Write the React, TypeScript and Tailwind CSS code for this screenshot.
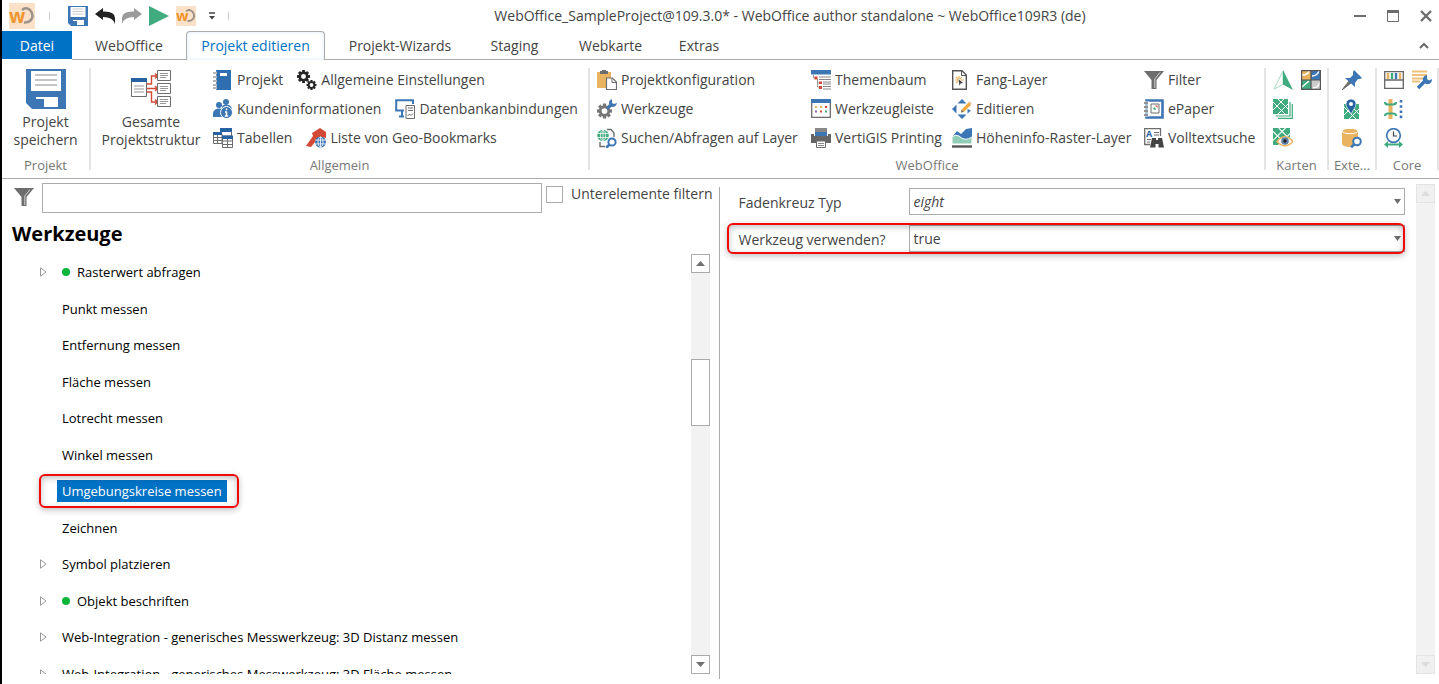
import type { ReactNode } from 'react';

const BLUE = '#3c76b5';
const GREEN = '#3fab7e';
const GREY = '#6d6d6d';
const SAND = '#e9b35f';
const RED = '#d24a35';

function Svg({ children, size = 'h-5 w-5', box = '0 0 20 20' }: { children: ReactNode; size?: string; box?: string }) {
  return (
    <svg className={`${size} shrink-0`} viewBox={box} fill="none" aria-hidden="true">
      {children}
    </svg>
  );
}

function Gear({ x, y, r, color }: { x: number; y: number; r: number; color: string }) {
  return (
    <g transform={`translate(${x} ${y})`} fill={color}>
      {[0, 45, 90, 135].map((a) => (
        <rect key={a} x={-r * 0.22} y={-r} width={r * 0.44} height={r * 2} transform={`rotate(${a})`} />
      ))}
      <circle r={r * 0.76} />
      <circle r={r * 0.38} fill="#fff" />
    </g>
  );
}

function Globe({ x, y, r, color }: { x: number; y: number; r: number; color: string }) {
  return (
    <g transform={`translate(${x} ${y})`}>
      <circle r={r} fill={color} />
      <g stroke="#fff" strokeWidth="0.8">
        <ellipse rx={r * 0.45} ry={r * 0.85} />
        <path d={`M0 ${-r}V${r}M${-r} ${-r * 0.35}H${r}M${-r} ${r * 0.35}H${r}`} />
      </g>
    </g>
  );
}

function Lens({ x, y, r }: { x: number; y: number; r: number }) {
  return (
    <g stroke={BLUE} strokeWidth="2">
      <path d={`M${x - r * 0.7} ${y + r * 0.7}l-3.2 3.2`} strokeWidth="2.6" />
      <circle cx={x} cy={y} r={r} fill="#fff" />
    </g>
  );
}

function MapTile({ x = 0, y = 0, s = 15 }: { x?: number; y?: number; s?: number }) {
  return (
    <g transform={`translate(${x} ${y}) scale(${s / 15})`}>
      <path d="M0 0H15V15H0Z" fill={GREEN} />
      <path d="M0 3L12 15M5 0L15 10M0 11L11 0M5 15L15 5" stroke="#fff" strokeWidth="1" />
    </g>
  );
}

const icons = {
  save: (
    <>
      <path d="M0 0H20V20H3L0 17Z" fill={BLUE} />
      <path d="M2.500 1H17.500V11H2.500ZM5 14H16V19H5Z" fill="#fff" />
      <path d="M4.500 3H15.500M4.500 5.500H15.500M4.500 8H15.500" stroke="#c4c4c4" strokeWidth="0.9" />
      <path d="M5 15H9V19H5Z" fill={BLUE} />
    </>
  ),
  notebook: (
    <>
      <path d="M3 0H18V20H3Z" fill="#2f6fb0" />
      <path d="M7 3H14V6H7Z" fill="#fff" />
      <path d="M0 3H4M0 7H4M0 11H4M0 15H4M0 18H4" stroke="#fff" strokeWidth="2.400" />
      <path d="M0 3H4M0 7H4M0 11H4M0 15H4M0 18H4" stroke={GREY} strokeWidth="1.200" />
    </>
  ),
  gears: (
    <>
      <Gear x={6.5} y={6.500} r={6.500} color="#262626" />
      <Gear x={14.500} y={15} r={5} color="#262626" />
    </>
  ),
  people: (
    <>
      <g fill={BLUE}>
        <circle cx="13" cy="3" r="3" />
        <circle cx="6" cy="6" r="3" />
        <path d="M9 8Q9 6 11 6H16Q19 7 19 12H9Z" />
        <path d="M0 18V14Q1 9.500 6 9.500Q11 9.500 11 14V18Z" />
      </g>
      <circle cx="13.500" cy="13.500" r="6" fill={BLUE} stroke="#fff" />
      <path d="M13.500 9.500V11.300M13.500 12.500V17.500M12 13H14M11.800 17H15.200" stroke="#fff" strokeWidth="1.500" />
    </>
  ),
  dbLink: (
    <>
      <path d="M9 11.500H1.200V1.200H18V5" stroke={BLUE} strokeWidth="2" />
      <path d="M4 17.500H9M7 12V17" stroke={BLUE} strokeWidth="2" />
      <path d="M11 6.500H19.500V19.500H11Z" fill="#fff" stroke={GREY} />
      <path d="M13 9H18M13 11.500H18M12.500 17L14.500 15L16 16.500L18 14.500" stroke={GREY} />
    </>
  ),
  tables: (
    <>
      <path d="M7.500 1.500H18.500V8H7.500Z" fill="#fff" stroke={GREY} />
      <path d="M7 0H19V4H7Z" fill="#2762a3" />
      <path d="M.5 6H9V15.500H.5ZM.5 9.500H9M.5 12.500H9M4.500 6V15.500" fill="#fff" stroke={GREY} />
      <path d="M0 4H9V7H0Z" fill="#2762a3" />
      <path d="M9.500 9H19.500V19.500H9.500ZM9.500 13H19.500M9.500 16.500H19.500M14.500 10V19.500" fill="#fff" stroke={GREY} />
      <path d="M9 7.500H20V11H9Z" fill="#2762a3" />
    </>
  ),
  bookmark: (
    <>
      <path d="M0 18L7 8L6 5L14 0L20 4V10L13 9L5 19Z" fill={RED} />
      <Globe x={14.500} y={14} r={5.500} color={BLUE} />
    </>
  ),
  clipboard: (
    <>
      <path d="M0 2H14V18H0Z" fill={SAND} />
      <path d="M3 2V1H5V0H9V1H11V4H3Z" fill={GREY} />
      <path d="M9.500 8H15.500L19.500 12V19.500H9.500Z" fill="#fff" stroke={GREY} strokeWidth="1.200" />
      <path d="M15 8V12.500H19.500" stroke={GREY} />
    </>
  ),
  tool: (
    <>
      <Gear x={7.500} y={12} r={7.500} color="#777" />
      <path d="M10 10L14 6" stroke={BLUE} strokeWidth="2.800" />
      <path d="M12 4Q12 1 15 0L15 4L17 5L20 4Q19 8 15 8Q12 7 12 4Z" fill={BLUE} />
    </>
  ),
  searchLayer: (
    <>
      <path d="M10 1.500H14L17 5V9M3 14V18.500H8" stroke={GREY} strokeWidth="1.400" />
      <Globe x={6} y={7.500} r={5.800} color={GREEN} />
      <Lens x={15} y={14} r={3.600} />
    </>
  ),
  tree: (
    <>
      <path d="M0 0H20V4.500H0Z" fill={BLUE} />
      <path d="M2.500 5V8H5M6.500 9V17H9M6.500 13H9" stroke="#999" />
      <path d="M3.500 6.500H6.500V9.500H3.500ZM8 11.500H11V14H8ZM8 16H11V19H8Z" fill={RED} />
      <path d="M8 7H20M8 9.500H20M12 12H20M12 14H20M12 16.500H20M12 19H20" stroke="#888" />
    </>
  ),
  toolbar: (
    <>
      <path d="M.7 1H19.300V18.300H.7Z" fill="#fff" stroke={GREY} strokeWidth="1.300" />
      <path d="M0 0H20V4H0Z" fill={BLUE} />
      <path d="M4 7H6V9H4ZM9 7H11V9H9Z" fill={SAND} />
      <path d="M14 7H16V9H14ZM9 11.500H11V13.500H9Z" fill={RED} />
      <path d="M4 11.500H6V13.500H4Z" fill="#9060b0" />
      <path d="M14 11.500H16V13.500H14Z" fill={GREEN} />
    </>
  ),
  printer: (
    <>
      <path d="M4 0H16V5H4Z" fill="#888" />
      <path d="M0 6H3V8H17V6H20V15H0Z" fill="#666" />
      <path d="M4 4H16V8H4Z" fill={BLUE} />
      <path d="M5.500 13H14.500V19.500H5.500Z" fill="#fff" stroke={GREY} />
      <path d="M7 15.500H13M7 17.500H13" stroke="#888" />
    </>
  ),
  snap: (
    <>
      <path d="M.7 .7H10L14.300 5V19.300H.7Z" fill="#fff" stroke="#555" strokeWidth="1.400" />
      <path d="M9.500 1V5.500H14" stroke="#555" />
      <path d="M3 10H6M7 6V9M4 7L6 9M10 7L8 9M9 10H12M4 13L6 11" stroke={SAND} strokeWidth="1.200" />
      <path d="M6.500 9L11 13L8.500 13.500L7.500 16Z" fill="#444" />
    </>
  ),
  edit: (
    <>
      <path d="M5.500 4.500L10 0L14.500 4.500ZM5.500 15.500L10 20L14.500 15.500ZM4.500 5.500L0 10L4.500 14.500ZM15.500 10L19 11.500L15.500 14.500Z" fill={BLUE} />
      <path d="M10.500 12L18 4.500" stroke="#f0a93f" strokeWidth="3.200" />
      <path d="M9 13.500L9.500 10.800L11.700 13Z" fill="#666" />
      <path d="M17 3L19 5" stroke="#e9c38f" strokeWidth="2" />
    </>
  ),
  terrain: (
    <>
      <path d="M0 9L5 3L9 6L14 1L20 0V12H0Z" fill={BLUE} />
      <path d="M0 9Q3 6 7 8Q13 14 20 9V16H0Z" fill="#8fcdb4" stroke="#fff" />
      <path d="M0 18.500H20" stroke="#555" strokeWidth="2.400" />
    </>
  ),
  funnel: (
    <>
      <path d="M0 1H20L12.500 10V19L7.500 19V10Z" fill={GREY} />
      <path d="M16 2.500L10.800 9V18" stroke="#ddd" strokeWidth="0.900" />
    </>
  ),
  epaper: (
    <>
      <path d="M2.500 1.500H18.500V18.500H2.500Z" fill="#fff" stroke={BLUE} strokeWidth="2.600" />
      <path d="M7 5H15V14H7Z" stroke={GREY} />
      <path d="M8.500 10L11 8L12 11Z" fill={GREEN} />
      <path d="M11 6.500H13.500V9Z" fill={RED} />
      <path d="M0 4H5M0 8H5M0 12H5M0 16H5" stroke="#fff" strokeWidth="3" />
      <path d="M0 4H4M0 8H4M0 12H4M0 16H4" stroke={GREY} strokeWidth="1.300" />
    </>
  ),
  fulltext: (
    <>
      <path d="M6 16.500H.7V.7H16.500V8" stroke={GREY} strokeWidth="1.300" />
      <text x="2" y="9" fontSize="9" fontWeight="700" fontFamily="Open Sans, sans-serif" fill="#2762a3">A</text>
      <path d="M10 4.500H15M10 7H15M3 11.500H7M3 14H6" stroke={GREY} />
      <path d="M8 10H12V12H14V10H18L20 19.500H14.500V16H11.500V19.500H6Z" fill="#444" />
    </>
  ),
  north: (
    <>
      <path d="M10 1L1 19L10 14.500Z" fill="#fff" stroke="#a4d6c0" />
      <path d="M10 0L20 20L10 14.500Z" fill={GREEN} />
    </>
  ),
  puzzle: (
    <>
      <path d="M0 0H10V10H0Z" fill={SAND} />
      <path d="M10 0H20V10H10Z" fill={BLUE} />
      <path d="M0 10H10V20H0Z" fill={GREEN} />
      <path d="M10 10H20V20H10Z" fill="#ccc" />
      <path d="M1 5Q7 5 8 1M11 6Q16 6 18 1M1 17L8 11M12 18Q17 18 19 12" stroke="#fff" strokeWidth="1.400" />
      <path d="M.6 .6H19.400V19.400H.6ZM10 0V20M0 10H20" stroke="#555" strokeWidth="1.200" />
    </>
  ),
  maps: (
    <>
      <path d="M5 19.300H19.300V5M2.500 17H17V3" stroke={GREEN} strokeWidth="1.200" />
      <MapTile />
    </>
  ),
  mapEye: (
    <>
      <MapTile s={17} />
      <path d="M4 13.500Q12 4 20 13.500Q12 22 4 13.500Z" fill="#fff" stroke={SAND} strokeWidth="1.500" />
      <circle cx="12" cy="13" r="3.800" fill="#5f7fa5" />
      <circle cx="12" cy="13" r="1.700" fill="#222" />
    </>
  ),
  pin: (
    <>
      <path d="M0 20L7 11L9 13Z" stroke={GREY} fill={GREY} />
      <path d="M12 0L20 8L18 9L16 9L13 13L13 17L3 8H8L11 5L11 2Z" fill={BLUE} />
    </>
  ),
  mapPin: (
    <>
      <MapTile x={2} y={5} />
      <path d="M9 15L4.500 7.500Q2.500 1 9 0Q15.500 1 13.500 7.500Z" fill="#2762a3" stroke="#fff" strokeWidth="0.600" />
      <circle cx="9" cy="5" r="2" fill="#fff" />
    </>
  ),
  dbSearch: (
    <>
      <path d="M0 3V16Q1 19 8 19L16 16V3Z" fill={SAND} />
      <ellipse cx="8" cy="3" rx="8" ry="2.700" fill={SAND} stroke="#fff" />
      <Lens x={15} y={13.500} r={3.800} />
    </>
  ),
  palette: (
    <>
      <path d="M.7 1.700H19.300V18.300H.7ZM.7 10H19.300" fill="#fff" stroke="#666" strokeWidth="1.300" />
      <path d="M4 3V9" stroke={SAND} strokeWidth="2.600" />
      <path d="M8 3V9" stroke={GREEN} strokeWidth="2.400" />
      <path d="M12 3V9" stroke={BLUE} strokeWidth="2.400" />
      <path d="M16 3V9" stroke={SAND} strokeWidth="2.400" />
    </>
  ),
  settingsList: (
    <>
      <path d="M0 1.500H15M0 5H15M0 8.500H11M0 11.500H8" stroke="#f0bf7a" strokeWidth="2.200" />
      <path d="M6 18L13 11" stroke={BLUE} strokeWidth="3.500" />
      <path d="M11 11Q10 6 15 5L15 9L17 10.500L20 9Q20 15 14 14Z" fill={BLUE} />
    </>
  ),
  align: (
    <>
      <path d="M6.500 0V20" stroke={SAND} strokeWidth="4" />
      <path d="M1 3Q1 5.500 4 5.500H9Q12 5.500 12 3M1 17Q1 14.500 4 14.500H9Q12 14.500 12 17" stroke={GREEN} strokeWidth="2.200" />
      <path d="M17 1V20" stroke={BLUE} strokeWidth="2.600" strokeDasharray="2.600 2.600" />
    </>
  ),
  clock: (
    <>
      <circle cx="9.500" cy="7.500" r="6.800" fill="#fff" stroke={BLUE} strokeWidth="1.700" />
      <path d="M9.500 3.500V8H13" stroke="#444" strokeWidth="1.200" />
      <path d="M0 16.500L4 13V15.500H15V13L19 16.500L15 20V17.500H4V20Z" fill={GREEN} />
    </>
  ),
};

type IconName = keyof typeof icons;
type Entry = { label: string; icon: IconName };

const tabs = [
  { label: 'WebOffice', width: 'w-[114px]' },
  { label: 'Projekt editieren', width: 'w-[139px]' },
  { label: 'Projekt-Wizards', width: 'w-[150px]' },
  { label: 'Staging', width: 'w-[79px]' },
  { label: 'Webkarte', width: 'w-[113px]' },
  { label: 'Extras', width: 'w-16' },
];

const generalRows: Entry[][] = [
  [{ label: 'Projekt', icon: 'notebook' }, { label: 'Allgemeine Einstellungen', icon: 'gears' }],
  [{ label: 'Kundeninformationen', icon: 'people' }, { label: 'Datenbankanbindungen', icon: 'dbLink' }],
  [{ label: 'Tabellen', icon: 'tables' }, { label: 'Liste von Geo-Bookmarks', icon: 'bookmark' }],
];

const webOfficeEntries: Entry[] = [
  { label: 'Projektkonfiguration', icon: 'clipboard' },
  { label: 'Themenbaum', icon: 'tree' },
  { label: 'Fang-Layer', icon: 'snap' },
  { label: 'Filter', icon: 'funnel' },
  { label: 'Werkzeuge', icon: 'tool' },
  { label: 'Werkzeugleiste', icon: 'toolbar' },
  { label: 'Editieren', icon: 'edit' },
  { label: 'ePaper', icon: 'epaper' },
  { label: 'Suchen/Abfragen auf Layer', icon: 'searchLayer' },
  { label: 'VertiGIS Printing', icon: 'printer' },
  { label: 'Höheninfo-Raster-Layer', icon: 'terrain' },
  { label: 'Volltextsuche', icon: 'fulltext' },
];

const iconGroups: { label: string; width: string; rows: Entry[][] }[] = [
  {
    label: 'Karten',
    width: 'w-[63px]',
    rows: [
      [{ label: 'Nordpfeil', icon: 'north' }, { label: 'Kartenansichten', icon: 'puzzle' }],
      [{ label: 'Karten', icon: 'maps' }],
      [{ label: 'Kartenvorschau', icon: 'mapEye' }],
    ],
  },
  {
    label: 'Exte...',
    width: 'w-12',
    rows: [
      [{ label: 'Pin', icon: 'pin' }],
      [{ label: 'Standort', icon: 'mapPin' }],
      [{ label: 'Datensuche', icon: 'dbSearch' }],
    ],
  },
  {
    label: 'Core',
    width: 'w-[62px]',
    rows: [
      [{ label: 'Farben', icon: 'palette' }, { label: 'Einstellungen', icon: 'settingsList' }],
      [{ label: 'Ausrichtung', icon: 'align' }],
      [{ label: 'Zeit', icon: 'clock' }],
    ],
  },
];

type TreeItem = { label: string; expandable?: boolean; active?: boolean; selected?: boolean };

const treeItems: TreeItem[] = [
  { label: 'Rasterwert abfragen', expandable: true, active: true },
  { label: 'Punkt messen' },
  { label: 'Entfernung messen' },
  { label: 'Fläche messen' },
  { label: 'Lotrecht messen' },
  { label: 'Winkel messen' },
  { label: 'Umgebungskreise messen', selected: true },
  { label: 'Zeichnen' },
  { label: 'Symbol platzieren', expandable: true },
  { label: 'Objekt beschriften', expandable: true, active: true },
  { label: 'Web-Integration - generisches Messwerkzeug: 3D Distanz messen', expandable: true },
  { label: 'Web-Integration - generisches Messwerkzeug: 3D Fläche messen', expandable: true },
];

function Logo({ size }: { size: string }) {
  return (
    <Svg size={size} box="0 0 26 26">
      <rect width="26" height="26" rx="1" fill="#fbe1c8" />
      <path d="M13 7Q17 3.500 21 7Q25.500 12 22 17Q19 20 15 19.500" stroke="#9c9187" strokeWidth="2.500" />
      <text x="0" y="20" fontSize="19" fontWeight="700" fontFamily="Open Sans, sans-serif" fill="#ee9530">w</text>
    </Svg>
  );
}

function RibbonButton({ label, icon }: Entry) {
  return (
    <button type="button" className="flex h-[29px] items-center gap-1 whitespace-nowrap text-left">
      <Svg>{icons[icon]}</Svg>
      {label}
    </button>
  );
}

function RibbonGroup({ label, width, children }: { label: string; width: string; children: ReactNode }) {
  return (
    <section aria-label={label} className={`${width} flex shrink-0`}>
      <div className="flex min-w-0 flex-1 flex-col pt-[5px]">
        <div className="h-[87px]">{children}</div>
        <div className="h-[26px] text-center text-[13px] leading-[26px] text-[#777]">{label}</div>
      </div>
      <div className="my-2 w-[2px] bg-[#e4e4e4]" />
    </section>
  );
}

function ScrollButton({ up, muted }: { up?: boolean; muted?: boolean }) {
  return (
    <button
      type="button"
      aria-label={up ? 'Nach oben' : 'Nach unten'}
      className={`flex h-[19px] w-[19px] shrink-0 items-center justify-center border ${muted ? 'border-[#e4e4e4] bg-[#f0f0f0] text-[#dcdcdc]' : 'border-[#ababab] bg-white text-[#707070]'}`}
    >
      <svg className="h-[5px] w-[9px]" viewBox="0 0 9 5" fill="currentColor" aria-hidden="true">
        <path d={up ? 'M0 5L4.500 0L9 5Z' : 'M0 0H9L4.500 5Z'} />
      </svg>
    </button>
  );
}

function PropertySelect({ id, label, value, options, italic, marked }: { id: string; label: string; value: string; options: string[]; italic?: boolean; marked?: boolean }) {
  return (
    <div className="relative flex h-[27px] items-center">
      <label htmlFor={id} className="w-[170px] shrink-0 pt-[2px]">{label}</label>
      <div className="relative flex-1">
        <select
          id={id}
          defaultValue={value}
          className={`block h-[27px] w-full appearance-none border border-[#ababab] bg-white pl-1 outline-none ${italic ? 'italic' : ''}`}
        >
          {options.map((o) => (
            <option key={o}>{o}</option>
          ))}
        </select>
        <svg className="pointer-events-none absolute right-1 top-[11px] h-[5px] w-[7px]" viewBox="0 0 7 5" fill="#6d6d6d" aria-hidden="true">
          <path d="M0 0H7L3.500 5Z" />
        </svg>
      </div>
      {marked && (
        <div className="pointer-events-none absolute -inset-y-[2px] -left-3 right-0 rounded-md border-2 border-[#f00a0a] shadow-[0_2px_6px_rgba(0,0,0,0.25),inset_0_2px_6px_rgba(0,0,0,0.25)]" />
      )}
    </div>
  );
}

function TitleBar() {
  return (
    <header className="flex h-[31px] shrink-0 items-center">
      <div className="flex w-[232px] shrink-0 items-center pl-[7px]">
        <Logo size="h-[26px] w-[26px]" />
        <div className="ml-[14px] mr-[18px] h-2 w-px bg-[#ccc]" />
        <div className="flex items-center gap-[7px]">
          <button type="button" aria-label="Speichern">
            <Svg>{icons.save}</Svg>
          </button>
          <button type="button" aria-label="Rückgängig">
            <Svg>
              <path d="M0 8L8 2V5.500Q20 5 20 12V18Q18 11 8 11V14Z" fill="#222" />
            </Svg>
          </button>
          <button type="button" aria-label="Wiederholen">
            <Svg>
              <path d="M20 8L12 2V5.500Q0 5 0 12V18Q2 11 12 11V14Z" fill="#9b9b9b" />
            </Svg>
          </button>
          <button type="button" aria-label="Starten">
            <Svg>
              <path d="M0 0L20 10L0 20Z" fill={GREEN} />
            </Svg>
          </button>
          <button type="button" aria-label="WebOffice">
            <Logo size="h-5 w-5" />
          </button>
        </div>
        <button type="button" aria-label="Symbolleiste anpassen" className="ml-3">
          <Svg size="h-2 w-2" box="0 0 8 8">
            <path d="M1 1H7" stroke="#444" strokeWidth="1.500" />
            <path d="M1 4H7L4 7.500Z" fill="#444" />
          </Svg>
        </button>
        <div className="ml-3 h-2 w-px bg-[#ccc]" />
      </div>
      <h1 className="min-w-0 flex-1 truncate pr-2 text-center">
        WebOffice_SampleProject@109.3.0* - WebOffice author standalone ~ WebOffice109R3 (de)
      </h1>
      <div className="flex shrink-0 items-center gap-[21px] pr-[7px]">
        <button type="button" aria-label="Minimieren">
          <Svg size="h-3 w-3" box="0 0 12 12">
            <path d="M0 6H12" stroke={GREY} strokeWidth="2" />
          </Svg>
        </button>
        <button type="button" aria-label="Maximieren">
          <Svg size="h-3 w-3" box="0 0 12 12">
            <path d="M.5 .5H11.500V11.500H.5Z" stroke={GREY} />
            <path d="M0 0H12V3H0Z" fill={GREY} />
          </Svg>
        </button>
        <button type="button" aria-label="Schließen">
          <Svg size="h-3 w-3" box="0 0 12 12">
            <path d="M1 1L11 11M11 1L1 11" stroke={GREY} strokeWidth="2.400" />
          </Svg>
        </button>
      </div>
    </header>
  );
}

function TabBar() {
  return (
    <nav className="flex h-[29px] shrink-0">
      <button type="button" className="h-7 w-[70px] bg-[#0072c6] pt-[2px] text-white">Datei</button>
      {tabs.map((tab) =>
        tab.label === 'Projekt editieren' ? (
          <button key={tab.label} type="button" className={`${tab.width} rounded-t border border-b-0 border-[#ababab] bg-white text-[#0072c6] shadow-[inset_0_0_4px_#dceaf7]`}>
            {tab.label}
          </button>
        ) : (
          <button key={tab.label} type="button" className={`${tab.width} border-b border-[#ababab] pt-[2px]`}>
            {tab.label}
          </button>
        ),
      )}
      <div className="flex flex-1 items-center justify-end border-b border-[#ababab] pr-[10px]">
        <button type="button" aria-label="Menüband reduzieren">
          <Svg size="h-[7px] w-[10px]" box="0 0 10 7">
            <path d="M1 6L5 2L9 6" stroke={GREY} strokeWidth="2.200" />
          </Svg>
        </button>
      </div>
    </nav>
  );
}

function Ribbon() {
  return (
    <div className="flex h-[119px] shrink-0 border-b border-[#ababab]">
      <RibbonGroup label="Projekt" width="w-[89px]">
        <button type="button" className="flex w-full flex-col items-center pt-1 leading-[18px]">
          <Svg size="h-10 w-10">{icons.save}</Svg>
          <span className="mt-1">Projekt<br />speichern</span>
        </button>
      </RibbonGroup>
      <RibbonGroup label="Allgemein" width="w-[499px]">
        <div className="flex">
          <button type="button" className="flex w-[120px] shrink-0 flex-col items-center pt-1 leading-[18px]">
            <Svg size="h-10 w-10" box="0 0 40 40">
              <path d="M.5 9.500H15.500V27.500H.5Z" fill="#fff" stroke={GREY} />
              <path d="M0 9H16V13H0Z" fill="#2762a3" />
              <path d="M3 17H13M3 20H13M3 23H13" stroke="#999" />
              <path d="M16 15H20.500V7H26M16 19.500H26M16 23H20.500V33H26M24 4.500L26.500 7L24 9.500M24 17L26.500 19.500L24 22M24 30.500L26.500 33L24 35.500" stroke={RED} strokeWidth="1.400" />
              {[1.5, 14.5, 27.500].map((y) => (
                <g key={y} transform={`translate(26 ${y})`}>
                  <path d="M.5 0H13.500V10H.5Z" fill="#fff" stroke={GREY} />
                  <path d="M3 3H11M3 5H11M3 7H9" stroke="#999" />
                </g>
              ))}
            </Svg>
            <span className="mt-1">Gesamte<br />Projektstruktur</span>
          </button>
          <div className="ml-[2px]">
            {generalRows.map((row) => (
              <div key={row[0].label} className="flex gap-[14px]">
                {row.map((entry) => (
                  <RibbonButton key={entry.label} {...entry} />
                ))}
              </div>
            ))}
          </div>
        </div>
      </RibbonGroup>
      <RibbonGroup label="WebOffice" width="w-[676px]">
        <div className="grid grid-cols-[214px_141px_192px_112px] pl-[7px]">
          {webOfficeEntries.map((entry) => (
            <RibbonButton key={entry.label} {...entry} />
          ))}
        </div>
      </RibbonGroup>
      {iconGroups.map((group) => (
        <RibbonGroup key={group.label} label={group.label} width={group.width}>
          <div className={group.rows[0].length > 1 ? 'pl-[7px]' : 'pl-[13px]'}>
            {group.rows.map((row) => (
              <div key={row[0].icon} className="flex h-[29px] items-center gap-2">
                {row.map((entry) => (
                  <button key={entry.icon} type="button" aria-label={entry.label}>
                    <Svg>{icons[entry.icon]}</Svg>
                  </button>
                ))}
              </div>
            ))}
          </div>
        </RibbonGroup>
      ))}
    </div>
  );
}

function TreeRow({ item }: { item: TreeItem }) {
  return (
    <li className="flex items-center pl-[38px] odd:h-9 even:h-[37px]">
      <span className="w-[17px] shrink-0">
        {item.expandable && (
          <Svg size="h-[10px] w-[7px]" box="0 0 7 10">
            <path d="M.5 .8V9.200L6 5Z" stroke="#999" />
          </Svg>
        )}
      </span>
      {item.active && <span className="-mr-[2px] ml-[5px] h-2 w-2 shrink-0 rounded-full bg-[#0db53a]" />}
      <button
        type="button"
        className={`relative whitespace-nowrap px-[5px] leading-[22px] ${item.active ? 'ml-1' : ''} ${item.selected ? 'bg-[#0072c6] text-white' : ''}`}
      >
        {item.label}
        {item.selected && (
          <span className="pointer-events-none absolute -bottom-[6px] -left-[18px] -right-3 -top-[6px] rounded-md border-2 border-[#f00a0a] shadow-[0_2px_6px_rgba(0,0,0,0.25),inset_0_2px_6px_rgba(0,0,0,0.25)]" />
        )}
      </button>
    </li>
  );
}

export default function App() {
  return (
    <div className="flex h-screen flex-col overflow-hidden border-l-2 border-black bg-white font-['Open_Sans','Noto_Sans',sans-serif] text-sm text-[#444]">
      <TitleBar />
      <TabBar />
      <Ribbon />
      <main className="flex min-h-0 flex-1">
        <section className="flex min-w-0 flex-[717] flex-col">
          <div className="flex pl-3 pr-[6px] pt-1">
            <div className="mt-1 w-7">
              <Svg>{icons.funnel}</Svg>
            </div>
            <input type="text" aria-label="Filter" className="h-[30px] min-w-0 flex-1 border border-[#ababab] px-2 outline-none" />
            <label className="ml-1 flex h-[22px] items-center gap-2 whitespace-nowrap">
              <input type="checkbox" className="h-[17px] w-[17px] appearance-none border border-[#ababab] bg-white" />
              Unterelemente filtern
            </label>
          </div>
          <h2 className="pl-[10px] pt-1 text-xl font-bold leading-[34px] text-black">Werkzeuge</h2>
          <div className="mb-[10px] mt-[3px] flex min-h-0 flex-1 pr-[9px]">
            <ul className="min-w-0 flex-1 overflow-hidden text-[13px] text-black">
              {treeItems.map((item) => (
                <TreeRow key={item.label} item={item} />
              ))}
            </ul>
            <div className="flex w-[19px] flex-col bg-[#f2f2f2]">
              <ScrollButton up />
              <div className="flex-[86]" />
              <div className="h-[67px] border border-[#ababab] bg-white" />
              <div className="flex-[229]" />
              <ScrollButton />
            </div>
          </div>
        </section>
        <section className="mb-[5px] mt-2 flex min-w-0 flex-[720] border-l border-[#ababab]">
          <div className="flex min-w-0 flex-1 flex-col gap-[10px] pl-[19px] pr-[11px] pt-px">
            <PropertySelect id="crosshair" label="Fadenkreuz Typ" value="eight" options={['eight', 'four', 'none']} italic />
            <PropertySelect id="use-tool" label="Werkzeug verwenden?" value="true" options={['true', 'false']} marked />
          </div>
          <div className="-mt-[3px] mb-[5px] mr-1 flex w-[19px] flex-col justify-between bg-[#f2f2f2]">
            <ScrollButton up muted />
            <ScrollButton muted />
          </div>
        </section>
      </main>
    </div>
  );
}
